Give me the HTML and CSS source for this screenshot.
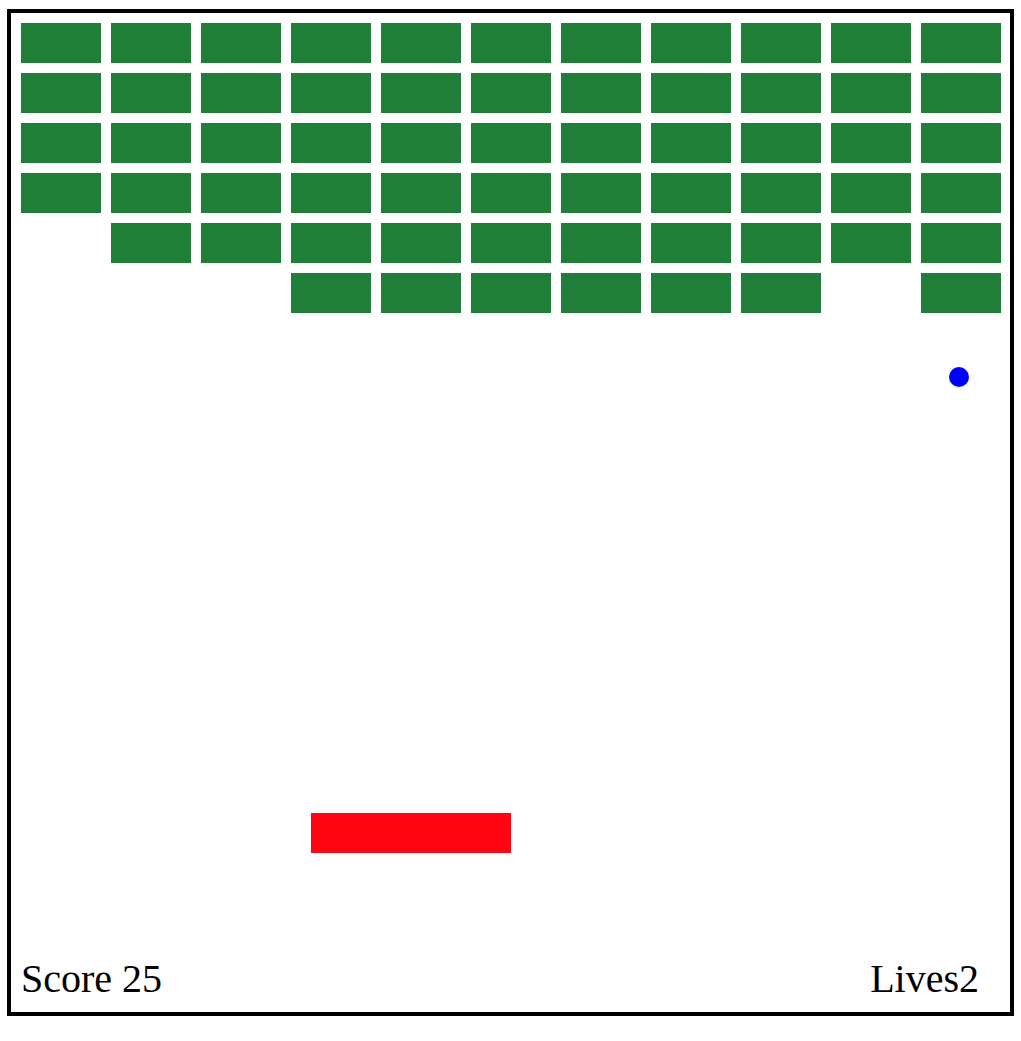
FILE: index.html
```html
<!DOCTYPE html>
<html lang="en">
<head>
    <meta charset="UTF-8">
    <meta name="viewport" content="width=device-width, initial-scale=1.0">
    <title>Breakout</title>
    <link rel="stylesheet" href="styles.css">
</head>
<body>
    <div class="board">
        <div class="bricks">
            <!-- row 1 -->
            <div class="brick"></div><div class="brick"></div><div class="brick"></div><div class="brick"></div>
            <div class="brick"></div><div class="brick"></div><div class="brick"></div><div class="brick"></div>
            <div class="brick"></div><div class="brick"></div><div class="brick"></div>
            <!-- row 2 -->
            <div class="brick"></div><div class="brick"></div><div class="brick"></div><div class="brick"></div>
            <div class="brick"></div><div class="brick"></div><div class="brick"></div><div class="brick"></div>
            <div class="brick"></div><div class="brick"></div><div class="brick"></div>
            <!-- row 3 -->
            <div class="brick"></div><div class="brick"></div><div class="brick"></div><div class="brick"></div>
            <div class="brick"></div><div class="brick"></div><div class="brick"></div><div class="brick"></div>
            <div class="brick"></div><div class="brick"></div><div class="brick"></div>
            <!-- row 4 -->
            <div class="brick"></div><div class="brick"></div><div class="brick"></div><div class="brick"></div>
            <div class="brick"></div><div class="brick"></div><div class="brick"></div><div class="brick"></div>
            <div class="brick"></div><div class="brick"></div><div class="brick"></div>
            <!-- row 5 -->
            <div class="brick broken"></div><div class="brick"></div><div class="brick"></div><div class="brick"></div>
            <div class="brick"></div><div class="brick"></div><div class="brick"></div><div class="brick"></div>
            <div class="brick"></div><div class="brick"></div><div class="brick"></div>
            <!-- row 6 -->
            <div class="brick broken"></div><div class="brick broken"></div><div class="brick broken"></div><div class="brick"></div>
            <div class="brick"></div><div class="brick"></div><div class="brick"></div><div class="brick"></div>
            <div class="brick"></div><div class="brick broken"></div><div class="brick"></div>
        </div>

        <div class="ball"></div>
        <div class="paddle"></div>

        <div class="status">
            <span class="score">Score 25</span>
            <span class="lives">Lives2</span>
        </div>
    </div>
</body>
</html>
```

FILE: styles.css
```css
body {
    font-family: "Liberation Serif", "Times New Roman", serif;
    margin: 9px 7px;
    background: #fff;
}

.board {
    position: relative;
    width: 999px;
    height: 999px;
    border: 4px solid #000;
    display: flex;
    flex-direction: column;
    justify-content: space-between;
}

.bricks {
    display: grid;
    grid-template-columns: repeat(11, 80px);
    grid-auto-rows: 40px;
    gap: 10px;
    padding: 10px;
}

.brick {
    background-color: #1f7f38;
}

.brick.broken {
    visibility: hidden;
}

.ball {
    position: absolute;
    left: 938px;
    top: 354px;
    width: 20px;
    height: 20px;
    border-radius: 50%;
    background-color: #0000ff;
}

.paddle {
    position: absolute;
    left: 300px;
    top: 800px;
    width: 200px;
    height: 40px;
    background-color: #ff0612;
}

.status {
    display: flex;
    justify-content: space-between;
    padding: 0 31px 13px 10px;
    font-size: 40px;
    line-height: 1;
    color: #000;
}
```
